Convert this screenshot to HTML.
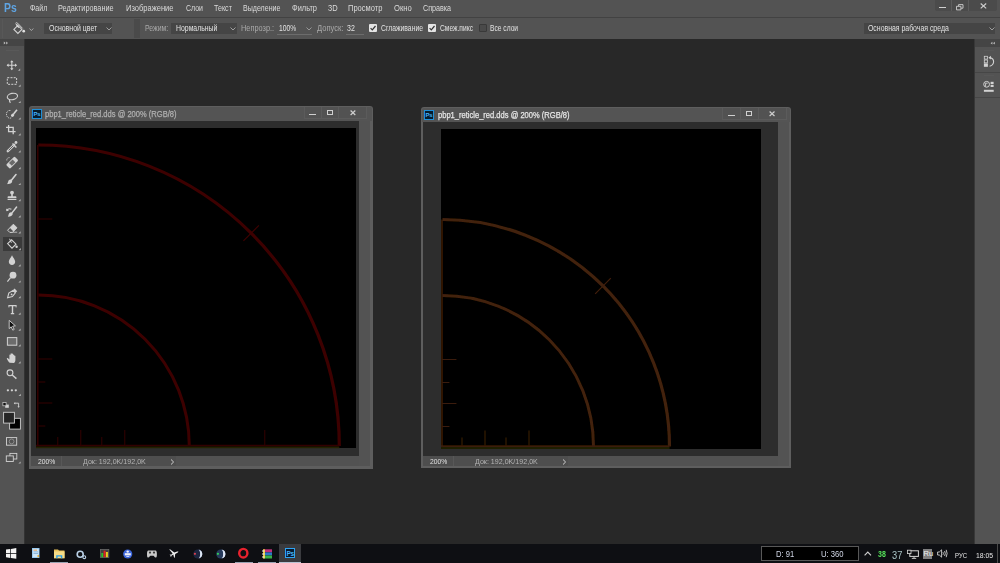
<!DOCTYPE html>
<html><head><meta charset="utf-8">
<style>
*{margin:0;padding:0;box-sizing:border-box}
html,body{width:1000px;height:563px;overflow:hidden;background:#282828;font-family:"Liberation Sans",sans-serif;color:#d8d8d8}
.a{position:absolute}
svg.a{overflow:visible}
.tx{position:absolute;white-space:nowrap;transform-origin:0 0;line-height:10px}
</style></head><body>
<!-- MENUBAR -->
<div class="a" style="left:0;top:0;width:1000px;height:17px;background:#535353"></div>
<div class="a" style="left:0;top:17px;width:1000px;height:1px;background:#424242"></div>
<div class="tx" style="left:4.4px;top:-0.2px;font-size:13.5px;font-weight:bold;color:#5fa4e2;line-height:15px;transform:scaleX(0.77)">Ps</div>
<div class="a" style="left:935px;top:0;width:62px;height:11px;background:#4b4b4b;border-radius:0 0 2px 2px"></div>
<div class="a" style="left:951px;top:0;width:1px;height:11px;background:#5c5c5c"></div>
<div class="a" style="left:968px;top:0;width:1px;height:11px;background:#5c5c5c"></div>
<div class="a" style="left:939px;top:6.8px;width:7px;height:1.3px;background:#cfcfcf"></div>
<svg class="a" style="left:954px;top:2px" width="12" height="9"><path d="M2.5 4.3h4.4v3.6h-4.4z M4.6 4.2v-1.6h4.4v3.6h-2" fill="none" stroke="#cfcfcf" stroke-width="0.9"/></svg>
<svg class="a" style="left:979.5px;top:3.2px" width="7" height="6"><path d="M0.7 0.5L6.2 5.4M6.2 0.5L0.7 5.4" stroke="#d0d0d0" stroke-width="1.1"/></svg>

<!-- OPTIONS BAR -->
<div class="a" style="left:0;top:18px;width:1000px;height:21px;background:#535353"></div>
<div class="a" style="left:2px;top:19px;width:1px;height:19px;background:#585858"></div>
<svg class="a" style="left:0;top:18px" width="40" height="20" viewBox="0 18 40 20">
  <path d="M13.9 29.4L17.9 25.4L21.9 29.4L17.9 33.4Z" fill="none" stroke="#d4d4d4" stroke-width="1.05"/>
  <path d="M15.6 23.2Q16.6 22.2 17.6 23.2L22.6 28.4" fill="none" stroke="#d4d4d4" stroke-width="1"/>
  <path d="M15.4 23.6L17.6 24.6L19.6 27.6L18.6 28L16.6 26.2Z" fill="#d4d4d4"/>
  <circle cx="23.7" cy="31.2" r="1.35" fill="#e0e0e0"/>
</svg>
<svg class="a" style="left:28.6px;top:28px" width="5" height="3.4"><path d="M0.5 0.5L2.4 2.6L4.3 0.5" fill="none" stroke="#a6a6a6" stroke-width="1"/></svg>
<div class="a" style="left:44px;top:23px;width:68px;height:11px;background:#454545"></div>
<svg class="a" style="left:106px;top:27px" width="6" height="4"><path d="M0.5 0.5L3 3L5.5 0.5" fill="none" stroke="#a8a8a8" stroke-width="0.9"/></svg>
<div class="a" style="left:134px;top:19px;width:6px;height:19px;background:#4a4a4a"></div>
<div class="a" style="left:171px;top:23px;width:66px;height:11px;background:#454545"></div>
<svg class="a" style="left:230px;top:27px" width="6" height="4"><path d="M0.5 0.5L3 3L5.5 0.5" fill="none" stroke="#a8a8a8" stroke-width="0.9"/></svg>
<div class="a" style="left:277px;top:33.5px;width:35px;height:1px;background:#6c6c6c"></div>
<svg class="a" style="left:306px;top:27px" width="6" height="4"><path d="M0.5 0.5L3 3L5.5 0.5" fill="none" stroke="#a0a0a0" stroke-width="0.9"/></svg>
<div class="a" style="left:346px;top:33.5px;width:18px;height:1px;background:#6c6c6c"></div>
<!-- checkboxes -->
<div class="a" style="left:369px;top:24px;width:8px;height:8px;background:#e4e4e4;border-radius:1px"></div>
<svg class="a" style="left:369px;top:24px" width="8" height="8"><path d="M1.6 4.2L3.3 5.9L6.5 2" fill="none" stroke="#333" stroke-width="1.2"/></svg>
<div class="a" style="left:427.5px;top:24px;width:8px;height:8px;background:#e4e4e4;border-radius:1px"></div>
<svg class="a" style="left:427.5px;top:24px" width="8" height="8"><path d="M1.6 4.2L3.3 5.9L6.5 2" fill="none" stroke="#333" stroke-width="1.2"/></svg>
<div class="a" style="left:478.5px;top:24px;width:8px;height:8px;background:#4a4a4a;border:1px solid #393939;border-radius:1px"></div>
<div class="a" style="left:863.5px;top:23px;width:131px;height:11px;background:#454545"></div>
<svg class="a" style="left:988.5px;top:27px" width="6" height="4"><path d="M0.5 0.5L3 3L5.5 0.5" fill="none" stroke="#a8a8a8" stroke-width="0.9"/></svg>

<!-- TOOLBAR -->
<div class="a" style="left:0;top:39px;width:24px;height:505px;background:#535353"></div>
<div class="a" style="left:24px;top:39px;width:1px;height:505px;background:#333333"></div>
<div class="a" style="left:0;top:39px;width:24px;height:7.4px;background:#454545"></div>
<div class="a" style="left:6px;top:49.5px;width:13px;height:1px;background:#595959"></div>
<div class="a" style="left:3px;top:237px;width:19px;height:13.5px;background:#3a3a3a"></div>
<svg class="a" style="left:0;top:0" width="26" height="544">
<path d="M3.8 41.6L5.6 43L3.8 44.4Z M6.2 41.6L8 43L6.2 44.4Z" fill="#bdbdbd"/>
<g stroke="#d2d2d2" stroke-width="1.1" fill="none"><path d="M11.8 61V69.6M7.2 65.3H16.4"/></g><path d="M11.8 60.3L10.1 62.3H13.5Z M11.8 70.2L10.1 68.2H13.5Z M6.6 65.3L8.6 63.6V67Z M17 65.3L15 63.6V67Z" fill="#d2d2d2"/>
<path d="M20.2 68.6 V70.8 H18Z" fill="#b4b4b4"/>
<rect x="7.3" y="77.7" width="9.3" height="6.6" fill="none" stroke="#d2d2d2" stroke-width="1" stroke-dasharray="2 1.2"/>
<path d="M20.599999999999998 84.5 V86.7 H18.4Z" fill="#b4b4b4"/>
<ellipse cx="12.4" cy="96.5" rx="5.2" ry="3.2" transform="rotate(-12 12.4 96.5)" fill="none" stroke="#d2d2d2" stroke-width="1.1"/><path d="M9.6 99.4Q9 101 10.4 102.8" fill="none" stroke="#d2d2d2" stroke-width="1.1"/>
<path d="M20.599999999999998 100.89999999999999 V103.1 H18.4Z" fill="#b4b4b4"/>
<path d="M10.4 110.5C7 109.8 5.6 113.8 7 116.3C8 118.2 10.2 118.6 11.3 117.8" fill="none" stroke="#d2d2d2" stroke-width="0.9" stroke-dasharray="1.2 0.8"/><path d="M17 109.8L13.5 114" stroke="#d2d2d2" stroke-width="1.6"/><ellipse cx="12.6" cy="115.3" rx="1.8" ry="1.5" transform="rotate(-45 12.6 115.3)" fill="#d2d2d2"/>
<path d="M20.599999999999998 117.39999999999999 V119.6 H18.4Z" fill="#b4b4b4"/>
<path d="M8.6 125V131.6H15.6M6 127.4H13.2V134.2" fill="none" stroke="#d2d2d2" stroke-width="1.3"/>
<path d="M20.599999999999998 133.2 V135.4 H18.4Z" fill="#b4b4b4"/>
<path d="M7.8 151.2L14.2 144.8" stroke="#d2d2d2" stroke-width="2.4" stroke-linecap="round"/><path d="M8.6 150.4L13.6 145.4" stroke="#535353" stroke-width="0.9"/><path d="M12.5 143.5L16.4 147.4" stroke="#d2d2d2" stroke-width="1.4"/><circle cx="16" cy="142.5" r="1.4" fill="#d2d2d2"/>
<path d="M20.599999999999998 150.2 V152.4 H18.4Z" fill="#b4b4b4"/>
<path d="M6.8 160.4Q6.6 157.6 9.6 157.6" fill="none" stroke="#d2d2d2" stroke-width="0.9" stroke-dasharray="1 0.7"/><rect x="6.2" y="159.8" width="12" height="5.6" rx="1.2" transform="rotate(-45 12.2 162.6)" fill="#d2d2d2"/><rect x="9.7" y="160.6" width="5" height="4" transform="rotate(-45 12.2 162.6)" fill="#6a6a6a"/>
<path d="M20.599999999999998 167.0 V169.20000000000002 H18.4Z" fill="#b4b4b4"/>
<path d="M16 174.6L11.4 180.2" stroke="#d2d2d2" stroke-width="1.6" stroke-linecap="round"/><path d="M10.6 179.6C12.6 180.2 12.8 182.6 10.6 183.6C9.4 184.2 7.8 184.2 7 184.2C7.6 183.4 7.8 182.6 8.2 181.4C8.6 180.2 9.6 179.4 10.6 179.6Z" fill="#d2d2d2"/>
<path d="M20.599999999999998 182.9 V185.10000000000002 H18.4Z" fill="#b4b4b4"/>
<circle cx="12" cy="192.6" r="1.9" fill="#d2d2d2"/><path d="M11.2 194V196.2H8.4Q7.6 196.2 7.6 197.2V198.2H16.4V197.2Q16.4 196.2 15.6 196.2H12.8V194Z" fill="#d2d2d2"/><rect x="7.6" y="199" width="8.8" height="1" fill="#d2d2d2"/>
<path d="M20.599999999999998 199.0 V201.20000000000002 H18.4Z" fill="#b4b4b4"/>
<path d="M6.6 210.6Q8.4 207.8 11.4 209.2" fill="none" stroke="#d2d2d2" stroke-width="1.1"/><path d="M6 208.6L6.6 211.2L9 210.4Z" fill="#d2d2d2"/><path d="M16.6 207L12.2 212.6" stroke="#d2d2d2" stroke-width="1.5" stroke-linecap="round"/><path d="M11.4 212.2C13.2 212.8 13.2 215 11.2 216C10 216.6 8.6 216.8 7.8 216.6C8.4 215.8 8.4 215 8.8 213.9C9.2 212.8 10.4 211.9 11.4 212.2Z" fill="#d2d2d2"/>
<path d="M20.599999999999998 215.2 V217.4 H18.4Z" fill="#b4b4b4"/>
<path d="M13.4 224.2L17 227.8L12.4 232.4H9.8L7.6 230.2Z" fill="none" stroke="#d2d2d2" stroke-width="1"/><path d="M13.4 224.2L17 227.8L13.4 231.4L9.8 227.8Z" fill="#d2d2d2"/><path d="M12.4 232.2H17.2" stroke="#d2d2d2" stroke-width="0.8"/>
<path d="M20.599999999999998 231.2 V233.4 H18.4Z" fill="#b4b4b4"/>
<path d="M7.6 243.6L11.6 239.8L16 244.2L12 248.2Z" fill="none" stroke="#d2d2d2" stroke-width="1.1"/><path d="M9.6 238.8L11.4 242.8" stroke="#d2d2d2" stroke-width="1"/><circle cx="16.6" cy="246.8" r="1.2" fill="#d2d2d2"/>
<path d="M20.8 248.0 V250.20000000000002 H18.6Z" fill="#b4b4b4"/>
<path d="M12 255.2C13 257.6 15.2 259.6 15.2 261.8C15.2 263.8 13.8 265 12 265C10.2 265 8.8 263.8 8.8 261.8C8.8 259.6 11 257.6 12 255.2Z" fill="#d2d2d2"/>
<path d="M20.599999999999998 264.20000000000005 V266.40000000000003 H18.4Z" fill="#b4b4b4"/>
<circle cx="13" cy="275.2" r="3.4" fill="#d2d2d2"/><path d="M10.6 277.6L7.4 281.6" stroke="#d2d2d2" stroke-width="1.2"/>
<path d="M20.599999999999998 280.40000000000003 V282.6 H18.4Z" fill="#b4b4b4"/>
<path d="M14.6 288.6L17.2 291.2L15.6 292.8L13 290.2Z" fill="#d2d2d2"/><path d="M13 290.4L15.4 292.8L12.4 296.6L7.6 297.8L8.8 293Z" fill="none" stroke="#d2d2d2" stroke-width="1.1"/><circle cx="11.6" cy="294.4" r="0.9" fill="#d2d2d2"/>
<path d="M20.599999999999998 296.0 V298.2 H18.4Z" fill="#b4b4b4"/>
<path d="M8.8 305.6H16.2M12.5 305.6V313.6M10.8 313.6H14.2" stroke="#d2d2d2" stroke-width="1.4"/><path d="M8.9 305V307.4M16.1 305V307.4" stroke="#d2d2d2" stroke-width="0.9"/>
<path d="M20.599999999999998 312.6 V314.8 H18.4Z" fill="#b4b4b4"/>
<path d="M9.2 320.4V328.6L11.2 326.8L12.8 330.2L14.2 329.4L12.6 326.2L15.4 325.8Z" fill="#111" stroke="#d2d2d2" stroke-width="0.9" stroke-linejoin="round"/>
<path d="M20.599999999999998 328.6 V330.8 H18.4Z" fill="#b4b4b4"/>
<rect x="7.4" y="337.6" width="9.4" height="7.6" fill="#6c6c6c" stroke="#d2d2d2" stroke-width="1"/>
<path d="M20.599999999999998 344.20000000000005 V346.40000000000003 H18.4Z" fill="#b4b4b4"/>
<path d="M9.6 362.8C8.2 361.6 7.2 359.6 6.8 358.6C6.6 358 7.4 357.6 8 358.2L9.4 359.6V355.2C9.4 354.4 10.6 354.4 10.6 355.2V358.2V353.8C10.6 353 11.8 353 11.8 353.8V358.2V354C11.8 353.2 13 353.2 13 354V358.4V355C13 354.2 14.2 354.2 14.2 355V358.6V356.2C14.2 355.4 15.4 355.4 15.4 356.2V360C15.4 361.6 14.6 362.6 14 363Z" fill="#d2d2d2"/>
<path d="M20.599999999999998 361.20000000000005 V363.40000000000003 H18.4Z" fill="#b4b4b4"/>
<circle cx="10" cy="372.8" r="2.9" fill="none" stroke="#d2d2d2" stroke-width="1.1"/><path d="M12.2 375L16.4 378.6" stroke="#d2d2d2" stroke-width="1.4"/>
<circle cx="7.9" cy="390.3" r="1.15" fill="#d2d2d2"/><circle cx="11.9" cy="390.3" r="1.15" fill="#d2d2d2"/><circle cx="15.8" cy="390.3" r="1.15" fill="#d2d2d2"/>
<path d="M20.8 393.8 V396.0 H18.6Z" fill="#b4b4b4"/>
<rect x="5.2" y="404.6" width="3.6" height="3.2" fill="#d2d2d2"/><rect x="2.9" y="402.6" width="3.2" height="3.2" fill="#111" stroke="#d2d2d2" stroke-width="0.7"/>
<path d="M14.6 403.2H18.6V407" fill="none" stroke="#d2d2d2" stroke-width="0.9"/><path d="M13.8 403.2L15.2 402V404.4Z M18.6 407.8L17.4 406.4H19.8Z" fill="#d2d2d2"/>
<rect x="9.6" y="418.3" width="10.8" height="10.8" fill="#000" stroke="#cfcfcf" stroke-width="0.9"/>
<rect x="3.6" y="412.3" width="10.8" height="10.8" fill="#262626" stroke="#cfcfcf" stroke-width="0.9"/>
<rect x="6.5" y="437.6" width="10.2" height="7.6" fill="none" stroke="#d2d2d2" stroke-width="0.9"/><circle cx="11.6" cy="441.4" r="2.4" fill="none" stroke="#9a9a9a" stroke-width="0.8"/>
<rect x="9.9" y="453.4" width="6.9" height="5.6" fill="#535353" stroke="#d2d2d2" stroke-width="0.9"/><rect x="6.3" y="455.9" width="7" height="5.6" fill="#535353" stroke="#d2d2d2" stroke-width="0.9"/>
<path d="M20.599999999999998 461.40000000000003 V463.6 H18.4Z" fill="#b4b4b4"/>
</svg>

<!-- RIGHT PANEL -->
<div class="a" style="left:975px;top:39px;width:25px;height:505px;background:#535353"></div>
<div class="a" style="left:974px;top:39px;width:1px;height:505px;background:#383838"></div>
<div class="a" style="left:975px;top:39px;width:25px;height:8px;background:#454545"></div>
<div class="a" style="left:975px;top:72px;width:25px;height:1px;background:#464646"></div>
<div class="a" style="left:975px;top:96.5px;width:25px;height:1px;background:#464646"></div>
<div class="a" style="left:984px;top:50px;width:10px;height:1px;background:#575757"></div>
<div class="a" style="left:984px;top:75px;width:10px;height:1px;background:#575757"></div>
<svg class="a" style="left:975px;top:39px" width="25" height="60" viewBox="975 39 25 60">
  <path d="M994.8 41.8L993 43.2L994.8 44.6Z M992.4 41.8L990.6 43.2L992.4 44.6Z" fill="#bdbdbd"/>
  <rect x="984.3" y="56.3" width="3.2" height="2.8" fill="none" stroke="#d2d2d2" stroke-width="0.8"/>
  <rect x="984.3" y="60" width="3.2" height="2.8" fill="none" stroke="#d2d2d2" stroke-width="0.8"/>
  <rect x="983.9" y="63.4" width="4" height="3.4" fill="#d2d2d2"/>
  <path d="M990 57.6Q993.8 58.4 993.6 62Q993.2 65.4 989.6 66.2" fill="none" stroke="#d2d2d2" stroke-width="1.1"/>
  <path d="M988.4 57.8L991 55.8L990.8 59.6Z" fill="#d2d2d2"/>
  <circle cx="986.6" cy="84.3" r="2.9" fill="none" stroke="#d2d2d2" stroke-width="1"/>
  <path d="M985.6 83.2V86.6M985.6 83.2H987.6" stroke="#d2d2d2" stroke-width="0.9"/>
  <rect x="990.6" y="81.8" width="3" height="2.2" fill="#d2d2d2"/>
  <rect x="990.6" y="84.8" width="3" height="2.2" fill="#d2d2d2"/>
  <rect x="983.9" y="89.8" width="9.8" height="2" fill="#d2d2d2"/>
</svg>

<!-- WINDOW 1 -->
<div class="a" style="left:29px;top:106px;width:344px;height:363px;background:#5e5e5e;border-radius:3px 3px 0 0"></div>
<div class="a" style="left:30px;top:107px;width:342px;height:14px;background:#545454;border-radius:2px 2px 0 0"></div>
<div class="a" style="left:304.4px;top:107px;width:63.10000000000002px;height:11.5px;border:1px solid #5b5b5b;border-top:none;background:#525252"></div>
<div class="a" style="left:321.2px;top:107px;width:1px;height:11.5px;background:#5b5b5b"></div>
<div class="a" style="left:338.3px;top:107px;width:1px;height:11.5px;background:#5b5b5b"></div>
<div class="a" style="left:309.2px;top:113.6px;width:6.400000000000034px;height:1.5px;background:#cfcfcf"></div>
<div class="a" style="left:326.8px;top:110.3px;width:6.399999999999977px;height:4.9px;border:1px solid #cfcfcf;border-top-width:1.5px"></div>
<svg class="a" style="left:350.2px;top:110px" width="5.900000000000034" height="5.4"><path d="M0.6 0.5L5.3000000000000345 5M5.3000000000000345 0.5L0.6 5" stroke="#cfcfcf" stroke-width="1.2"/></svg>
<div class="a" style="left:31.6px;top:108.8px;width:10.4px;height:10px;background:#061c2e;border:1px solid #1f8fd8"></div>
<div class="tx" style="left:33.4px;top:110.6px;font-size:6px;line-height:7px;color:#46b2fa;font-weight:bold;letter-spacing:-0.2px">Ps</div>
<div class="a" style="left:31px;top:121px;width:328px;height:335px;background:#2d2d2d"></div>
<div class="a" style="left:359px;top:121px;width:11px;height:345px;background:#535353"></div>
<div class="a" style="left:31px;top:456px;width:328px;height:10px;background:#525252"></div>
<div class="a" style="left:31px;top:456px;width:145px;height:10px;background:#4e4e4e"></div>
<div class="a" style="left:61px;top:456px;width:1px;height:10px;background:#585858"></div>
<svg class="a" style="left:170px;top:458.5px" width="5" height="6"><path d="M1 0.5L3.6 3L1 5.5" fill="none" stroke="#d0d0d0" stroke-width="1"/></svg>
<svg class="a" style="left:36px;top:128px" width="320" height="320" viewBox="36 128 320 320">
  <rect x="36" y="128" width="320" height="320" fill="#000"/>
  <g filter="url(#soft)"><path d="M38.3 145 A301 301 0 0 1 339.3 446" fill="none" stroke="#3e0202" stroke-width="3.2"/>
  <path d="M38.3 295 A151 151 0 0 1 189.3 446" fill="none" stroke="#3e0202" stroke-width="3.0"/>
  <path d="M37.8 145 V446" stroke="#300101" stroke-width="1.6"/>
  <path d="M36 445.7 H339.3" stroke="#300101" stroke-width="1.8"/>
  <path d="M36 447.5 H339.3" stroke="#242000" stroke-width="1.6"/>
  <path d="M38.3 426 h7" stroke="#300101" stroke-width="1.1"/>
  <path d="M57.8 446 v-9" stroke="#300101" stroke-width="1.1"/>
  <path d="M38.3 403 h14" stroke="#300101" stroke-width="1.1"/>
  <path d="M80.8 446 v-16" stroke="#300101" stroke-width="1.1"/>
  <path d="M38.3 382 h7" stroke="#300101" stroke-width="1.1"/>
  <path d="M101.8 446 v-9" stroke="#300101" stroke-width="1.1"/>
  <path d="M38.3 359 h14" stroke="#300101" stroke-width="1.1"/>
  <path d="M124.8 446 v-16" stroke="#300101" stroke-width="1.1"/>
  <path d="M38.3 219 h14" stroke="#300101" stroke-width="1.1"/>
  <path d="M264.8 446 v-16" stroke="#300101" stroke-width="1.1"/>
  <path d="M243.4 240.9 L258.9 225.4" stroke="#3e0202" stroke-width="1.2"/></g>
</svg>

<!-- WINDOW 2 -->
<div class="a" style="left:421px;top:107px;width:370px;height:361px;background:#5e5e5e;border-radius:3px 3px 0 0"></div>
<div class="a" style="left:422px;top:108px;width:368px;height:14px;background:#545454;border-radius:2px 2px 0 0"></div>
<div class="a" style="left:721.8px;top:108px;width:65.20000000000005px;height:11.5px;border:1px solid #5b5b5b;border-top:none;background:#525252"></div>
<div class="a" style="left:740.2px;top:108px;width:1px;height:11.5px;background:#5b5b5b"></div>
<div class="a" style="left:757.8px;top:108px;width:1px;height:11.5px;background:#5b5b5b"></div>
<div class="a" style="left:728px;top:114.6px;width:6.7000000000000455px;height:1.5px;background:#cfcfcf"></div>
<div class="a" style="left:745.6px;top:111.3px;width:6.399999999999977px;height:4.9px;border:1px solid #cfcfcf;border-top-width:1.5px"></div>
<svg class="a" style="left:768.9px;top:111px" width="6.100000000000023" height="5.4"><path d="M0.6 0.5L5.500000000000023 5M5.500000000000023 0.5L0.6 5" stroke="#cfcfcf" stroke-width="1.2"/></svg>
<div class="a" style="left:423.6px;top:109.8px;width:10.4px;height:10px;background:#061c2e;border:1px solid #1f8fd8"></div>
<div class="tx" style="left:425.4px;top:111.6px;font-size:6px;line-height:7px;color:#46b2fa;font-weight:bold;letter-spacing:-0.2px">Ps</div>
<div class="a" style="left:423px;top:122px;width:355px;height:334px;background:#2d2d2d"></div>
<div class="a" style="left:778px;top:122px;width:11px;height:344px;background:#535353"></div>
<div class="a" style="left:423px;top:456px;width:355px;height:10px;background:#525252"></div>
<div class="a" style="left:423px;top:456px;width:145px;height:10px;background:#4e4e4e"></div>
<div class="a" style="left:453px;top:456px;width:1px;height:10px;background:#585858"></div>
<svg class="a" style="left:562px;top:458.5px" width="5" height="6"><path d="M1 0.5L3.6 3L1 5.5" fill="none" stroke="#d0d0d0" stroke-width="1"/></svg>
<svg class="a" style="left:441px;top:129px" width="320" height="320" viewBox="441 129 320 320">
  <rect x="441" y="129" width="320" height="320" fill="#000"/>
  <g filter="url(#soft)"><path d="M442.5 219.5 A227 227 0 0 1 669.5 446.5" fill="none" stroke="#42200a" stroke-width="3.2"/>
  <path d="M442.5 295.5 A151 151 0 0 1 593.5 446.5" fill="none" stroke="#42200a" stroke-width="3.0"/>
  <path d="M442.0 219.5 V446.5" stroke="#3a1c08" stroke-width="1.6"/>
  <path d="M441 446.2 H669.5" stroke="#3a1c08" stroke-width="1.8"/>
  <path d="M441 448.0 H669.5" stroke="#2a2a00" stroke-width="1.6"/>
  <path d="M442.5 426.5 h7" stroke="#3a1c08" stroke-width="1.1"/>
  <path d="M462.0 446.5 v-9" stroke="#3a1c08" stroke-width="1.1"/>
  <path d="M442.5 403.5 h14" stroke="#3a1c08" stroke-width="1.1"/>
  <path d="M485.0 446.5 v-16" stroke="#3a1c08" stroke-width="1.1"/>
  <path d="M442.5 382.5 h7" stroke="#3a1c08" stroke-width="1.1"/>
  <path d="M506.0 446.5 v-9" stroke="#3a1c08" stroke-width="1.1"/>
  <path d="M442.5 359.5 h14" stroke="#3a1c08" stroke-width="1.1"/>
  <path d="M529.0 446.5 v-16" stroke="#3a1c08" stroke-width="1.1"/>
  <path d="M595.2 293.8 L610.8 278.2" stroke="#42200a" stroke-width="1.2"/></g>
</svg>
<svg width="0" height="0" style="position:absolute"><defs><filter id="soft" x="-5%" y="-5%" width="110%" height="110%"><feGaussianBlur stdDeviation="0.55"/></filter></defs></svg>

<!-- TASKBAR -->
<div class="a" style="left:0;top:544px;width:1000px;height:19px;background:#0e0f13"></div>
<!-- win logo -->
<svg class="a" style="left:6px;top:548px" width="11" height="11" viewBox="0 0 11 11">
  <path d="M0 1.6L4.3 1V5H0Z M5 0.9L10.3 0.1V5H5Z M0 5.8H4.3V9.9L0 9.3Z M5 5.8H10.3V10.8L5 10Z" fill="#f2f2f2"/>
</svg>
<!-- notepad-ish -->
<svg class="a" style="left:32px;top:548.4px" width="8" height="10" viewBox="0 0 8 10">
  <rect x="0" y="0" width="7.5" height="10" fill="#8cc4ee"/>
  <rect x="0.8" y="0.8" width="5.9" height="8.4" fill="#cfe6f8"/>
  <rect x="1.5" y="1.6" width="3.5" height="1" fill="#f0a050"/>
  <rect x="1.5" y="3.5" width="4.5" height="0.8" fill="#7fb0d8"/>
  <rect x="1.5" y="5.2" width="4.5" height="0.8" fill="#7fb0d8"/>
  <rect x="5.5" y="7" width="1.5" height="2.2" fill="#e0b040"/>
</svg>
<!-- folder -->
<svg class="a" style="left:53.5px;top:549px" width="11" height="9.5" viewBox="0 0 11 9.5">
  <path d="M0 0.5H4L5 1.6H10.5V9.2H0Z" fill="#e8c15a"/>
  <path d="M0 2.4H10.5V9.2H0Z" fill="#f6dc86"/>
  <path d="M2.2 9.3V6.3H8.3V9.3H6.9V7.6H3.6V9.3Z" fill="#2a9de6"/>
</svg>
<div class="a" style="left:50px;top:561.5px;width:17.5px;height:1.5px;background:#98a2b2"></div>
<!-- magnifier -->
<svg class="a" style="left:76px;top:549.5px" width="11" height="9" viewBox="0 0 11 9">
  <circle cx="4.2" cy="4.2" r="3" fill="none" stroke="#b9d0e6" stroke-width="1.6"/>
  <circle cx="8.3" cy="7.2" r="1.4" fill="none" stroke="#b9d0e6" stroke-width="1.1"/>
</svg>
<!-- chart -->
<svg class="a" style="left:100px;top:549px" width="9.5" height="9" viewBox="0 0 9.5 9">
  <rect x="0" y="0" width="9.2" height="8.8" fill="#6e6e6e"/>
  <rect x="0.6" y="0.6" width="8" height="7.6" fill="#404040"/>
  <rect x="1.3" y="4" width="2" height="4.2" fill="#2cc02c"/>
  <rect x="3.6" y="1.6" width="2" height="6.6" fill="#e02020"/>
  <rect x="5.9" y="3" width="2" height="5.2" fill="#e8d020"/>
</svg>
<!-- blue circle -->
<svg class="a" style="left:123px;top:548.5px" width="9.5" height="10" viewBox="0 0 9.5 10">
  <circle cx="4.7" cy="5" r="4.6" fill="#3c66dc"/>
  <rect x="1.8" y="4.2" width="6" height="2.2" fill="#f0f0f8"/>
  <circle cx="4.7" cy="2.6" r="1.2" fill="#f0f0f8"/>
  <rect x="3.3" y="7" width="3" height="1" fill="#c8d4f8"/>
</svg>
<!-- gamepad -->
<svg class="a" style="left:146.5px;top:549.5px" width="10" height="8" viewBox="0 0 10 8">
  <path d="M1.3 0.6H8.6C9.4 0.6 9.9 2 9.9 4.2C9.9 6.8 9.4 7.6 8.6 7.6C7.6 7.6 7.2 5.8 6.4 5.8H3.5C2.7 5.8 2.3 7.6 1.3 7.6C0.5 7.6 0 6.8 0 4.2C0 2 0.5 0.6 1.3 0.6Z" fill="#c9c9c9"/>
  <circle cx="3" cy="2.6" r="1.1" fill="#3a3a3a"/>
  <circle cx="7" cy="2.6" r="1.1" fill="#3a3a3a"/>
</svg>
<!-- airplane -->
<svg class="a" style="left:169px;top:549px" width="10" height="9" viewBox="0 0 10 9">
  <path d="M0.3 0.6L1 0.2L5.3 3.6L8.2 2.6C9.4 2.3 9.8 2.8 8.8 3.4L6.2 5L5.8 8.6L5.1 8.8L4.3 5.6L2.4 6.8L2.2 7.8L1.7 7.9L1.5 6.5L0.6 5.7L1.2 5.4L2.1 5.8L3.6 4.6Z" fill="#f0f0f0"/>
</svg>
<!-- sphere 1 -->
<svg class="a" style="left:192.5px;top:548.5px" width="10" height="10" viewBox="0 0 10 10">
  <circle cx="4.8" cy="5" r="4.5" fill="#1c2540"/>
  <path d="M4.8 0.5A4.5 4.5 0 0 1 4.8 9.5A2.4 4.5 0 0 0 4.8 0.5Z" fill="#aebfdc"/>
  <path d="M5.6 1.2A3.6 3.8 0 0 1 5.6 8.8A1.6 3.8 0 0 0 5.6 1.2Z" fill="#dde6f4"/>
  <circle cx="1.9" cy="4.8" r="1.1" fill="#d8404e"/>
</svg>
<!-- sphere 2 -->
<svg class="a" style="left:215.5px;top:548.5px" width="10" height="10" viewBox="0 0 10 10">
  <circle cx="4.8" cy="5" r="4.6" fill="#263a5c"/>
  <path d="M4.8 0.4A4.6 4.6 0 0 1 4.8 9.6A2.4 4.6 0 0 0 4.8 0.4Z" fill="#b8c8e4"/>
  <path d="M5.6 1.1A3.7 3.9 0 0 1 5.6 8.9A1.6 3.9 0 0 0 5.6 1.1Z" fill="#e0e8f6"/>
  <circle cx="1.9" cy="4.8" r="1.1" fill="#30d058"/>
</svg>
<!-- opera -->
<svg class="a" style="left:238px;top:548px" width="11" height="10.5" viewBox="0 0 11 10.5">
  <ellipse cx="5.3" cy="5.2" rx="4.1" ry="4.3" fill="none" stroke="#e8222e" stroke-width="2.4"/>
</svg>
<div class="a" style="left:235px;top:561.5px;width:17.5px;height:1.5px;background:#98a2b2"></div>
<!-- winrar -->
<svg class="a" style="left:261.5px;top:548.5px" width="10.5" height="10" viewBox="0 0 10.5 10">
  <rect x="1" y="0.3" width="9" height="3" fill="#c0307a"/>
  <rect x="1" y="3.4" width="9" height="3" fill="#2b78c8"/>
  <rect x="1" y="6.5" width="9" height="3" fill="#38b048"/>
  <rect x="1" y="0.3" width="2" height="9.2" fill="#e8c840"/>
  <path d="M0 2H2.5M0 5H2.5M0 8H2.5" stroke="#f0f0f0" stroke-width="1"/>
</svg>
<div class="a" style="left:258px;top:561.5px;width:17.5px;height:1.5px;background:#98a2b2"></div>
<!-- ps active -->
<div class="a" style="left:278.7px;top:544px;width:22.3px;height:19px;background:#3a3b3f"></div>
<div class="a" style="left:278.7px;top:561.5px;width:22.3px;height:1.5px;background:#b8c2d2"></div>
<div class="a" style="left:284.8px;top:548.2px;width:10.5px;height:10px;background:#061a30;border:1px solid #2ea4f4"></div>
<div class="tx" style="left:286.4px;top:550.2px;font-size:6.6px;line-height:7px;color:#46b2fa;font-weight:bold;letter-spacing:-0.2px">Ps</div>

<!-- tray -->
<div class="a" style="left:761px;top:546px;width:97.5px;height:15px;background:#000;border:1px solid #585858"></div>
<svg class="a" style="left:863.5px;top:550.5px" width="8" height="5"><path d="M0.6 4.4L3.8 1L7 4.4" fill="none" stroke="#cfcfcf" stroke-width="1.1"/></svg>
<svg class="a" style="left:906.5px;top:549.5px" width="12" height="9" viewBox="0 0 12 9">
  <rect x="2.8" y="0.8" width="8.6" height="5.6" fill="none" stroke="#d6d6d6" stroke-width="1"/>
  <path d="M7 6.5V8.2M4.8 8.4H9.2" stroke="#d6d6d6" stroke-width="0.9"/>
  <rect x="0.4" y="0.2" width="3.6" height="3.4" fill="#0e0f13" stroke="#d6d6d6" stroke-width="0.8"/>
</svg>
<div class="a" style="left:922.9px;top:548.7px;width:9px;height:10px;background:#7f7f80"></div>
<div class="tx" style="left:923.6px;top:549.8px;font-size:7.5px;line-height:8px;color:#f4f4f4">Ru</div>
<svg class="a" style="left:937px;top:549.3px" width="11" height="9" viewBox="0 0 11 9">
  <path d="M0.6 3H2.3L4.6 0.8V8.2L2.3 6H0.6Z" fill="none" stroke="#d2d2d2" stroke-width="0.9"/>
  <path d="M6 3.2Q6.8 4.5 6 5.8M7.6 2Q9 4.5 7.6 7M9.2 0.8Q11 4.5 9.2 8.2" fill="none" stroke="#d2d2d2" stroke-width="0.9"/>
</svg>
<div class="a" style="left:997.3px;top:544px;width:1.2px;height:19px;background:#4a4a4a"></div>

<div class="tx gt" style="left:29.60px;top:3.40px;font-size:8.5px;color:#dadada;font-weight:normal;transform:scaleX(0.8310);">Файл</div>
<div class="tx gt" style="left:57.80px;top:3.40px;font-size:8.5px;color:#dadada;font-weight:normal;transform:scaleX(0.8582);">Редактирование</div>
<div class="tx gt" style="left:125.80px;top:3.40px;font-size:8.5px;color:#dadada;font-weight:normal;transform:scaleX(0.8863);">Изображение</div>
<div class="tx gt" style="left:185.70px;top:3.40px;font-size:8.5px;color:#dadada;font-weight:normal;transform:scaleX(0.8174);">Слои</div>
<div class="tx gt" style="left:214.00px;top:3.40px;font-size:8.5px;color:#dadada;font-weight:normal;transform:scaleX(0.8370);">Текст</div>
<div class="tx gt" style="left:243.00px;top:3.40px;font-size:8.5px;color:#dadada;font-weight:normal;transform:scaleX(0.8320);">Выделение</div>
<div class="tx gt" style="left:291.80px;top:3.40px;font-size:8.5px;color:#dadada;font-weight:normal;transform:scaleX(0.8742);">Фильтр</div>
<div class="tx gt" style="left:328.20px;top:3.40px;font-size:8.5px;color:#dadada;font-weight:normal;transform:scaleX(0.8856);">3D</div>
<div class="tx gt" style="left:348.40px;top:3.40px;font-size:8.5px;color:#dadada;font-weight:normal;transform:scaleX(0.8877);">Просмотр</div>
<div class="tx gt" style="left:394.40px;top:3.40px;font-size:8.5px;color:#dadada;font-weight:normal;transform:scaleX(0.8989);">Окно</div>
<div class="tx gt" style="left:422.70px;top:3.40px;font-size:8.5px;color:#dadada;font-weight:normal;transform:scaleX(0.8418);">Справка</div>
<div class="tx gt" style="left:48.60px;top:23.40px;font-size:8.5px;color:#e2e2e2;font-weight:normal;transform:scaleX(0.8195);">Основной цвет</div>
<div class="tx gt" style="left:144.90px;top:23.40px;font-size:8.5px;color:#a9a9a9;font-weight:normal;transform:scaleX(0.8154);">Режим:</div>
<div class="tx gt" style="left:176.40px;top:23.40px;font-size:8.5px;color:#e2e2e2;font-weight:normal;transform:scaleX(0.8100);">Нормальный</div>
<div class="tx gt" style="left:240.60px;top:23.40px;font-size:8.5px;color:#a9a9a9;font-weight:normal;transform:scaleX(0.8674);">Непрозр.:</div>
<div class="tx gt" style="left:279.00px;top:23.40px;font-size:8.5px;color:#e2e2e2;font-weight:normal;transform:scaleX(0.7934);">100%</div>
<div class="tx gt" style="left:316.90px;top:23.40px;font-size:8.5px;color:#a9a9a9;font-weight:normal;transform:scaleX(0.8906);">Допуск:</div>
<div class="tx gt" style="left:347.00px;top:23.40px;font-size:8.5px;color:#e2e2e2;font-weight:normal;transform:scaleX(0.8224);">32</div>
<div class="tx gt" style="left:380.70px;top:23.40px;font-size:8.5px;color:#e2e2e2;font-weight:normal;transform:scaleX(0.7998);">Сглаживание</div>
<div class="tx gt" style="left:439.90px;top:23.40px;font-size:8.5px;color:#e2e2e2;font-weight:normal;transform:scaleX(0.7846);">Смеж.пикс</div>
<div class="tx gt" style="left:490.00px;top:23.40px;font-size:8.5px;color:#e2e2e2;font-weight:normal;transform:scaleX(0.7852);">Все слои</div>
<div class="tx gt" style="left:868.00px;top:23.40px;font-size:8.5px;color:#e2e2e2;font-weight:normal;transform:scaleX(0.8129);">Основная рабочая среда</div>
<div class="tx gt" style="left:45.30px;top:109.20px;font-size:9px;color:#b0b0b0;font-weight:normal;transform:scaleX(0.8391);-webkit-text-stroke:0.25px #b0b0b0;">pbp1_reticle_red.dds @ 200% (RGB/8)</div>
<div class="tx gt" style="left:437.50px;top:110.20px;font-size:9px;color:#e6e6e6;font-weight:normal;transform:scaleX(0.8391);-webkit-text-stroke:0.25px #e6e6e6;">pbp1_reticle_red.dds @ 200% (RGB/8)</div>
<div class="tx gt" style="left:37.90px;top:457.00px;font-size:7.5px;color:#e0e0e0;font-weight:normal;transform:scaleX(0.9019);">200%</div>
<div class="tx gt" style="left:83.20px;top:457.00px;font-size:7.5px;color:#b4b4b4;font-weight:normal;transform:scaleX(0.9457);">Док: 192,0K/192,0K</div>
<div class="tx gt" style="left:429.90px;top:457.00px;font-size:7.5px;color:#e0e0e0;font-weight:normal;transform:scaleX(0.9019);">200%</div>
<div class="tx gt" style="left:475.20px;top:457.00px;font-size:7.5px;color:#b4b4b4;font-weight:normal;transform:scaleX(0.9457);">Док: 192,0K/192,0K</div>
<div class="tx gt" style="left:775.90px;top:549.20px;font-size:9px;color:#d0d6e6;font-weight:normal;transform:scaleX(0.8416);">D: 91</div>
<div class="tx gt" style="left:821.00px;top:549.20px;font-size:9px;color:#d0d6e6;font-weight:normal;transform:scaleX(0.8525);">U: 360</div>
<div class="tx gt" style="left:878.30px;top:549.00px;font-size:8.5px;color:#55e05a;font-weight:bold;transform:scaleX(0.8224);">38</div>
<div class="tx gt" style="left:892.00px;top:549.60px;font-size:10.5px;color:#a8c2c4;font-weight:normal;transform:scaleX(0.8869);">37</div>
<div class="tx gt" style="left:955.00px;top:550.50px;font-size:7.5px;color:#e8e8e8;font-weight:normal;transform:scaleX(0.8012);">РУС</div>
<div class="tx gt" style="left:976.00px;top:550.50px;font-size:7.5px;color:#e8e8e8;font-weight:normal;transform:scaleX(0.9141);">18:05</div>
</body></html>
